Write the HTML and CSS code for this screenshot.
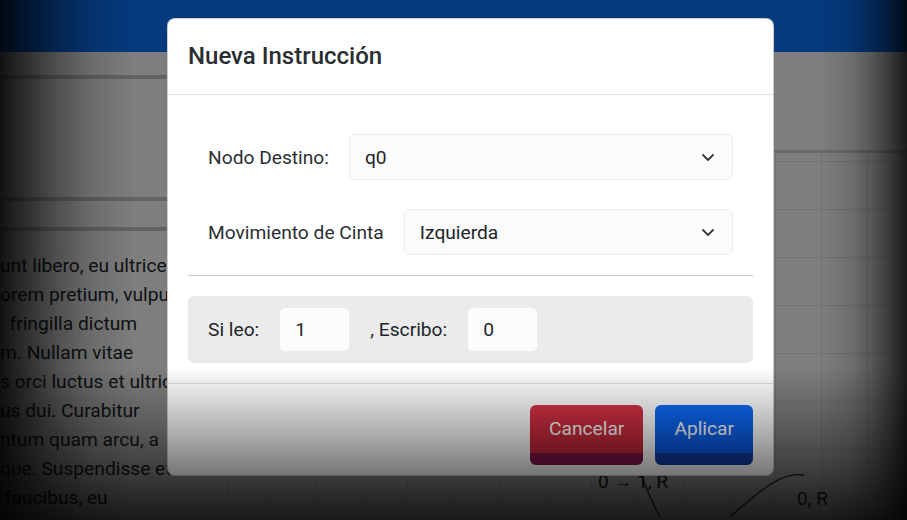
FILE: index.html
```html
<!DOCTYPE html>
<html lang="es">
<head>
<meta charset="utf-8">
<title>Nueva Instrucción</title>
<link rel="stylesheet" href="styles.css">
</head>
<body>
<div class="page">
  <header class="topbar"></header>
  <div class="main">
    <aside class="side">
      <div class="side-toolbar"></div>
      <div class="side-panel"></div>
      <div class="side-tabs"></div>
      <div class="side-text"><span class="ln">unt libero, eu ultrices nibh</span><span class="ln">orem pretium, vulputate</span><span class="ln">  fringilla dictum</span><span class="ln">m. Nullam vitae</span><span class="ln">s orci luctus et ultrices</span><span class="ln">us dui. Curabitur</span><span class="ln">ntum quam arcu, a</span><span class="ln">que. Suspendisse et</span><span class="ln"> faucibus, eu</span></div>
    </aside>
    <section class="workspace">
      <div class="ws-toolbar"></div>
      <div class="canvas">
        <svg class="edges" width="679" height="364" viewBox="0 0 679 364">
          <path d="M412 318 Q420 342 432 364" />
          <path d="M502 364 C530 340 552 318 576 322" />
        </svg>
        <span class="edge-label lbl-a">0 → 1, R</span>
        <span class="edge-label lbl-b">0, R</span>
      </div>
    </section>
  </div>
</div>

<div class="backdrop"></div>

<div class="modal">
  <div class="modal-header">
    <h5 class="modal-title">Nueva Instrucción</h5>
  </div>
  <div class="modal-body">
    <div class="fields">
      <div class="field-row">
        <label class="field-label">Nodo Destino:</label>
        <div class="select">
          <span>q0</span>
          <svg class="chev" width="12" height="7" viewBox="0 0 12 7"><path d="M1 1l5 5 5-5"/></svg>
        </div>
      </div>
      <div class="field-row">
        <label class="field-label">Movimiento de Cinta</label>
        <div class="select">
          <span>Izquierda</span>
          <svg class="chev" width="12" height="7" viewBox="0 0 12 7"><path d="M1 1l5 5 5-5"/></svg>
        </div>
      </div>
    </div>
    <hr class="sep">
    <div class="rw-panel">
      <span>Si leo:</span>
      <div class="mini-input">1</div>
      <span>, Escribo:</span>
      <div class="mini-input">0</div>
    </div>
  </div>
  <div class="modal-footer">
    <button class="btn btn-cancel">Cancelar</button>
    <button class="btn btn-apply">Aplicar</button>
  </div>
</div>

<div class="vignette"></div>
</body>
</html>
```
FILE: styles.css
```css
* { box-sizing: border-box; }

html, body {
  margin: 0;
  padding: 0;
}

body {
  width: 907px;
  height: 520px;
  overflow: hidden;
  font-family: Roboto, "Liberation Sans", sans-serif;
  font-size: 19.2px;
  color: #212529;
  background: #fdfdfd;
  position: relative;
}

/* ---------- background page ---------- */
.page {
  width: 907px;
  height: 520px;
  display: flex;
  flex-direction: column;
  background: #fdfdfd;
}

.topbar {
  height: 52px;
  flex: none;
  background: #0b74ff;
}

.main {
  flex: 1;
  display: flex;
  min-height: 0;
}

.side {
  width: 228px;
  flex: none;
  border-right: 1px solid #e2e2e2;
  display: flex;
  flex-direction: column;
  overflow: hidden;
}

.side-toolbar {
  height: 27px;
  border-bottom: 4px solid #c6c6c6;
}

.side-panel {
  height: 122px;
  border-bottom: 4px solid #c6c6c6;
}

.side-tabs {
  height: 30px;
  border-bottom: 4px solid #c6c6c6;
}

.side-text {
  padding-top: 20px;
  line-height: 29px;
  font-size: 19.2px;
  color: #23262b;
}

.ln {
  display: block;
  white-space: pre;
}

.workspace {
  flex: 1;
  display: flex;
  flex-direction: column;
  min-width: 0;
}

.ws-toolbar {
  height: 101px;
  flex: none;
  border-bottom: 3px solid #d4d4d4;
}

.canvas {
  flex: 1;
  position: relative;
  background-color: #fdfdfd;
  background-image:
    linear-gradient(to right, #e4e4e4 1px, transparent 1px),
    linear-gradient(to bottom, #e4e4e4 1px, transparent 1px);
  background-size: 46px 48px;
  background-position: 41px 56px;
}

.edges {
  position: absolute;
  left: 0;
  top: 0;
}

.edges path {
  fill: none;
  stroke: #2a2a2a;
  stroke-width: 1.3;
}

.edge-label {
  position: absolute;
  font-size: 19px;
  color: #1e1e1e;
  white-space: nowrap;
  line-height: 22px;
}

.lbl-a { left: 370px; top: 318px; }
.lbl-b { left: 569px; top: 335px; }

/* ---------- overlay layers ---------- */
.backdrop {
  position: absolute;
  inset: 0;
  background: rgba(0, 0, 0, 0.5);
}

.vignette {
  position: absolute;
  inset: 0;
  pointer-events: none;
  background:
    linear-gradient(to right, rgba(0,0,0,.86) 0, rgba(0,0,0,.6) 30px, rgba(0,0,0,.35) 60px, rgba(0,0,0,.14) 92px, rgba(0,0,0,0) 135px),
    linear-gradient(to left, rgba(0,0,0,.8) 0, rgba(0,0,0,.55) 17px, rgba(0,0,0,.3) 37px, rgba(0,0,0,.12) 57px, rgba(0,0,0,0) 88px),
    linear-gradient(to bottom, rgba(0,0,0,0) 367px, rgba(0,0,0,.3) 430px, rgba(0,0,0,.52) 472px, rgba(0,0,0,.8) 520px);
}

/* ---------- modal ---------- */
.modal {
  position: absolute;
  left: 167px;
  top: 18px;
  width: 607px;
  background: #fff;
  border: 1px solid rgba(0, 0, 0, 0.2);
  border-radius: 8px;
  overflow: hidden;
}

.modal-header {
  height: 76px;
  padding: 0 20px;
  display: flex;
  align-items: center;
  border-bottom: 1px solid #dee2e6;
}

.modal-title {
  margin: 0;
  font-size: 24px;
  font-weight: 500;
  color: #2a2d31;
  line-height: 1.2;
}

.modal-body {
  padding: 20px 20px 20px;
}

.fields {
  padding: 19px 20px 0;
  display: flex;
  flex-direction: column;
  gap: 29px;
}

.field-row {
  display: flex;
  align-items: center;
  gap: 20px;
}

.field-label {
  color: #2b2f33;
  white-space: nowrap;
}

.select {
  flex: 1;
  height: 46px;
  display: flex;
  align-items: center;
  justify-content: space-between;
  padding: 0 18px 0 15px;
  background: #fbfbfb;
  border: 1px solid #ececec;
  border-radius: 6px;
  color: #212529;
}

.chev path {
  fill: none;
  stroke: #343a40;
  stroke-width: 1.8;
  stroke-linecap: round;
  stroke-linejoin: round;
}

.sep {
  margin: 20px 0;
  border: 0;
  border-top: 1px solid #c9c9c9;
}

.rw-panel {
  display: flex;
  align-items: center;
  gap: 21px;
  padding: 12px 20px;
  background: #ebebeb;
  border-radius: 6px;
}

.mini-input {
  width: 69px;
  height: 43px;
  display: flex;
  align-items: center;
  padding-left: 15px;
  background: #fcfcfc;
  border-radius: 5px;
}

.modal-footer {
  display: flex;
  justify-content: flex-end;
  gap: 12px;
  padding: 21px 20px 10px;
  border-top: 1px solid #dcdcdc;
}

.btn {
  font-family: Roboto, "Liberation Sans", sans-serif;
  font-size: 19.2px;
  color: #fff;
  height: 60px;
  padding: 0 19px;
  border: 0;
  border-radius: 6px;
  line-height: 1;
}

.btn-cancel {
  background: linear-gradient(#d83244, #c02638);
  border-bottom: 12px solid #7e1446;
}

.btn-apply {
  background: linear-gradient(#0d6cfb, #0a5ae2);
  border-bottom: 12px solid #11389e;
}
```
